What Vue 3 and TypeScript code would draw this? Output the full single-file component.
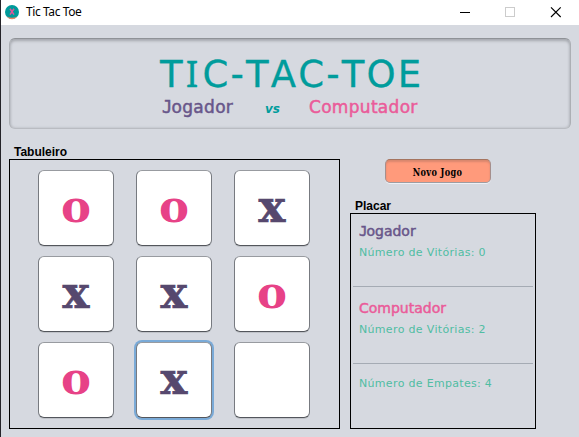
<script setup lang="ts">
import { ref } from 'vue'

type Mark = 'x' | 'o' | ''

const board = ref<Mark[]>(['o', 'o', 'x', 'x', 'x', 'o', 'o', 'x', ''])
const focused = ref(7)
const playerWins = ref(0)
const computerWins = ref(2)
const draws = ref(4)

function newGame() {
  board.value = Array<Mark>(9).fill('')
  focused.value = -1
}
</script>

<template>
  <div class="window">
    <header class="titlebar">
      <svg class="app-icon" width="14" height="15" viewBox="0 0 14 15">
        <circle cx="7" cy="7" r="7" fill="#009a9a" />
        <path d="M2 11.6 Q7 14 12 11.6 L10 13.6 Q7 15 4 13.6Z" fill="#f0825f" />
        <path d="M5 3.8 L9 9.6 M9 3.8 L5 9.6" stroke="#e0559a" stroke-width="1.5" />
      </svg>
      <span class="caption">Tic Tac Toe</span>
      <svg class="controls" width="120" height="25" viewBox="0 0 120 25" fill="none">
        <path d="M1 12.5H11" stroke="#000" />
        <rect x="46.5" y="7.5" width="9" height="9" stroke="#ccc" />
        <path d="M92 7.3L101.7 17M101.7 7.3L92 17" stroke="#000" stroke-width="1.15" />
      </svg>
    </header>

    <section class="banner">
      <h1 class="title">T<span class="serifed">I</span>C-TAC-TOE</h1>
      <div class="versus">
        <span class="name player"><span class="slab">J</span>ogador</span>
        <span class="vs">vs</span>
        <span class="name computer">Computador</span>
      </div>
    </section>

    <main class="content">
      <section class="board-group">
        <h2 class="legend">Tabuleiro</h2>
        <div class="board">
          <button
            v-for="(mark, i) in board"
            :key="i"
            class="cell"
            :class="[mark, { focused: i === focused }]"
          >{{ mark }}</button>
        </div>
      </section>

      <aside class="side">
        <button class="new-game" @click="newGame"><span class="new-label">Novo Jogo</span></button>
        <h2 class="legend">Placar</h2>
        <div class="score">
          <div class="entry">
            <div class="who player"><span class="slab">J</span>ogador</div>
            <div class="count">Número de Vitórias: {{ playerWins }}</div>
          </div>
          <div class="entry">
            <div class="who computer">Computador</div>
            <div class="count">Número de Vitórias: {{ computerWins }}</div>
          </div>
          <div class="entry draws">
            <div class="count">Número de Empates: {{ draws }}</div>
          </div>
        </div>
      </aside>
    </main>
  </div>
</template>

<style>
body { margin: 0; overflow: hidden; }
</style>

<style scoped>
* { box-sizing: border-box; }
.window {
  width: 579px;
  height: 437px;
  background: #d6d9e0;
  border-left: 1px solid #242329;
  font-family: "DejaVu Sans", sans-serif;
  font-kerning: none;
  overflow: hidden;
}
.titlebar {
  height: 25px;
  background: #fff;
  display: flex;
  align-items: center;
  padding-left: 4px;
}
.app-icon { flex: none; }
.caption {
  margin: -1px 0 0 7px;
  font: 12px/24px "Noto Sans", sans-serif;
  letter-spacing: -0.4px;
  color: #000;
}
.controls { margin-left: auto; }
.banner {
  margin: 13px 8px 0;
  height: 91px;
  border: 1px solid;
  border-color: #8f9297 #acafb4 #b9bcc2 #acafb4;
  border-radius: 6px;
  box-shadow: inset 0 2px 3px #a6a9af, inset 0 0 3px #b7bac0;
}
.title {
  margin: 13px 0 0 150px;
  height: 43px;
  font-size: 37px;
  line-height: 42px;
  font-weight: 400;
  letter-spacing: 2.15px;
  color: #009c9c;
  white-space: nowrap;
  -webkit-text-stroke: 0.3px;
}
.serifed { font-family: "Noto Sans", sans-serif; margin: 0 2px 0 1px; }
.slab { font-family: "DejaVu Sans Mono", monospace; }
.versus {
  display: flex;
  height: 22px;
  line-height: 25px;
  margin-left: 152px;
  white-space: nowrap;
}
.name { font-size: 17px; letter-spacing: 0.3px; -webkit-text-stroke: 0.5px; }
.name.player { width: 103px; }
.player { color: #68568a; }
.computer { color: #ea5c9a; }
.player .slab { margin: 0 -1px 0 0; }
.vs {
  width: 44px;
  font-size: 12px;
  line-height: 28px;
  font-weight: 700;
  font-style: italic;
  color: #009c9c;
}
.content { display: flex; gap: 10px; padding-left: 8px; }
.legend {
  margin: 0;
  padding-left: 5px;
  font: bold 12px/14px "Liberation Sans", sans-serif;
  color: #000;
}
.board-group { width: 331px; padding-top: 16px; }
.board {
  height: 270px;
  border: 1px solid #000;
  display: grid;
  grid-template: repeat(3, 76px) / repeat(3, 76px);
  gap: 10px 22px;
  padding: 10px 0 0 28px;
}
.cell {
  padding: 0 0 2px;
  border: 1px solid;
  border-color: #989ba0 #777a80 #53565c;
  border-radius: 6px;
  background: #fff;
  box-shadow: 0 1px 0 #bfc2c8;
  font: bold 45px/68px "DejaVu Serif", serif;
  text-align: center;
}
.cell.focused { box-shadow: 0 0 0 2px #7aaad7; }
.cell.x { color: #56486e; -webkit-text-stroke: 0.7px; }
.cell.o { color: #e74287; }
.side { width: 186px; padding-top: 30px; }
.new-game {
  display: block;
  width: 106px;
  height: 24px;
  margin: 0 0 16px 35px;
  padding: 0;
  border: 1px solid;
  border-color: #a5745f #a58f8d #9d9ca2;
  border-radius: 5px;
  background: #ff9a7b;
  box-shadow: inset 0 2px 2px #d9876e, 0 1px 0 #edf0f5;
  color: #000;
}
.new-label {
  display: inline-block;
  font: bold 11px/20px "DejaVu Serif", serif;
  transform: scaleX(0.74);
  letter-spacing: 0.5px;
  white-space: nowrap;
  padding-top: 3px;
}
.score { height: 216px; border: 1px solid #000; padding: 0 2px; }
.entry { height: 77px; border-bottom: 1px solid #a5abb4; padding: 8px 0 0 6px; white-space: nowrap; }
.entry:first-child { height: 73px; }
.who { font-size: 14px; line-height: 18px; -webkit-text-stroke: 0.5px; }
.count { margin-top: 5px; font-size: 11px; line-height: 16px; letter-spacing: 0.3px; color: #50bda3; }
.entry + .entry { padding-top: 12px; }
.entry.draws { border: 0; padding-top: 7px; }
</style>
